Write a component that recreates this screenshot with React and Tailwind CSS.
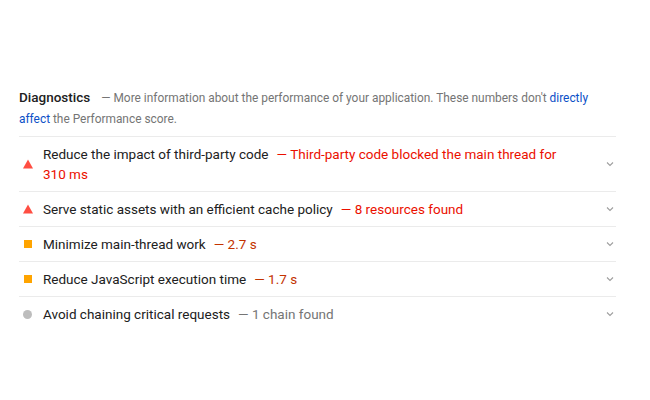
const audits = [
  {
    icon: "fail",
    title: "Reduce the impact of third-party code",
    value: "Third-party code blocked the main thread for 310 ms",
  },
  {
    icon: "fail",
    title: "Serve static assets with an efficient cache policy",
    value: "8 resources found",
  },
  { icon: "average", title: "Minimize main-thread work", value: "2.7 s" },
  { icon: "average", title: "Reduce JavaScript execution time", value: "1.7 s" },
  { icon: "info", title: "Avoid chaining critical requests", value: "1 chain found" },
];

const valueColor = {
  fail: "text-[#eb0f00]",
  average: "text-[#c33300]",
  info: "text-[#757575]",
};

const Icon = ({ type }) => {
  if (type === "fail") {
    return (
      <svg width="10" height="10" viewBox="0 0 10 10" className="block">
        <polygon points="5,0.5 10,9.5 0,9.5" fill="#ff4e42" />
      </svg>
    );
  }
  if (type === "average") {
    return <div className="w-[8px] h-[8px] bg-[#ffa400] mx-[1px]" />;
  }
  return <div className="w-[9px] h-[9px] rounded-full bg-[#bdbdbd]" />;
};

const Chevron = () => (
  <svg width="8" height="6" viewBox="0 0 8 6" className="block">
    <path d="M1 1.5 L4 4.5 L7 1.5" fill="none" stroke="#9e9e9e" strokeWidth="1.1" />
  </svg>
);

const App = () => {
  return (
    <div className="w-[650px] h-[400px] bg-white" style={{ fontFamily: "Roboto, sans-serif" }}>
      <div className="pt-[87px] pl-[19px] w-[616px]">
        <div className="text-[11.9px] leading-[21px] text-[#757575] pb-[6px] pr-[8px]">
          <span className="text-[13.5px] font-medium text-[#212121] mr-[11px]">Diagnostics</span>
          — More information about the performance of your application. These numbers don't{" "}
          <span className="text-[#0c50c7]">directly affect</span> the Performance score.
        </div>
        {audits.map((a, i) => (
          <div
            key={i}
            className="flex items-center border-t border-[#ebebeb] py-[7px] text-[13.5px] leading-[20px]"
          >
            <div className="w-[24px] pl-[4px] shrink-0 flex items-center">
              <Icon type={a.icon} />
            </div>
            <div className="flex-1 text-[#212121] pr-[40px]">
              {a.title}
              <span className={`${valueColor[a.icon]} ml-[8px]`}>— {a.value}</span>
            </div>
            <div className="pr-[2px]">
              <Chevron />
            </div>
          </div>
        ))}
      </div>
    </div>
  );
};

export default App;
